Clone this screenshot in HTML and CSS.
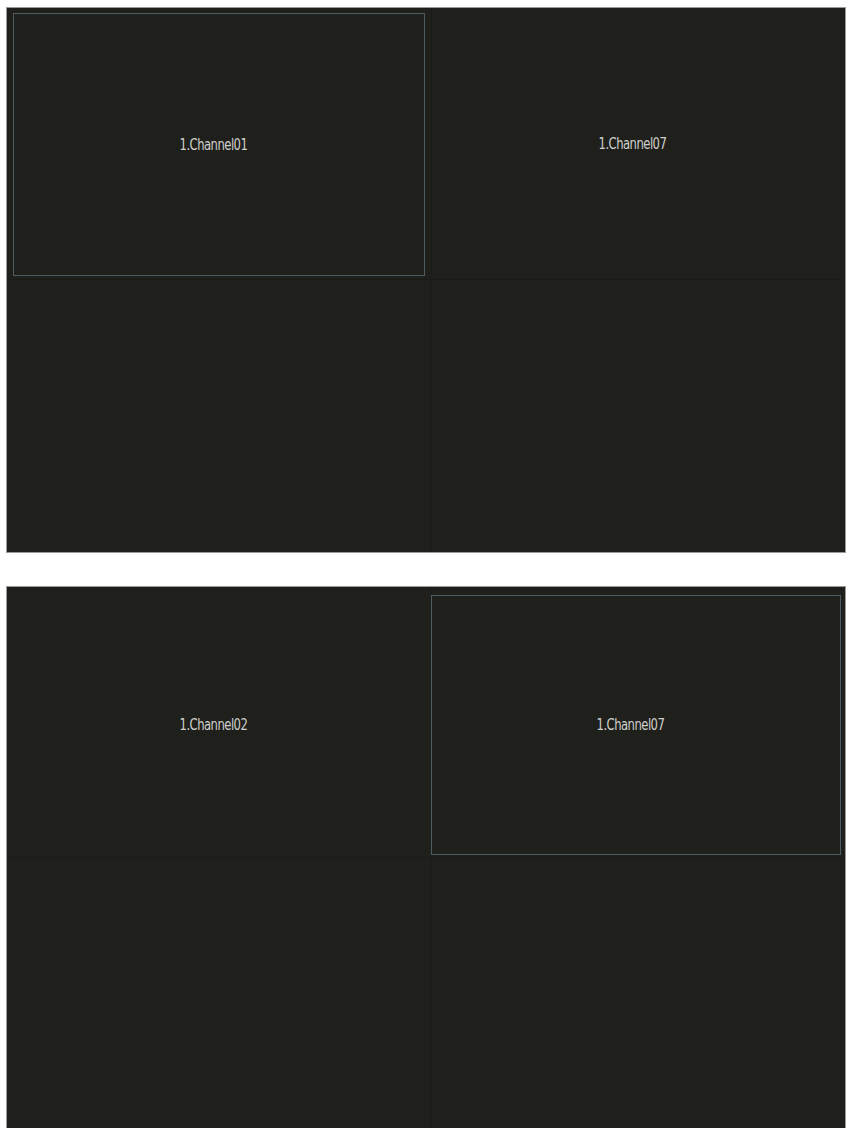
FILE: index.html
```html
<!DOCTYPE html>
<html>
<head>
<meta charset="utf-8">
<link rel="stylesheet" href="styles.css">
</head>
<body>
<div class="page">
  <div class="panel panel-top">
    <div class="cell"><div class="frame frame-a selected"><span class="label">1.Channel01</span></div></div>
    <div class="cell"><div class="frame"><span class="label">1.Channel07</span></div></div>
    <div class="cell"></div>
    <div class="cell"></div>
  </div>
  <div class="panel panel-bottom">
    <div class="cell"><div class="frame frame-c"><span class="label">1.Channel02</span></div></div>
    <div class="cell"><div class="frame frame-b selected"><span class="label">1.Channel07</span></div></div>
    <div class="cell"></div>
    <div class="cell"></div>
  </div>
</div>
</body>
</html>
```
FILE: styles.css
```css
html, body {
  margin: 0;
  padding: 0;
  background: #ffffff;
}
.page {
  padding: 8px 3px 0 7px;
  display: flex;
  flex-direction: column;
  gap: 35px;
}
.panel {
  width: 838px;
  background: #1f201c;
  box-shadow: 0 0 0 1px #9a9a96;
  display: grid;
  grid-template-columns: 425px 413px;
}
.panel-top {
  height: 544px;
  grid-template-rows: 272px 272px;
}
.panel-bottom {
  height: 541px;
  grid-template-rows: 271px 270px;
}
.cell {
  display: flex;
  box-sizing: border-box;
}
.cell:nth-child(1) { border-right: 1px solid #1b1c19; border-bottom: 1px solid #1b1c19; }
.cell:nth-child(2) { border-bottom: 1px solid #1b1c19; }
.cell:nth-child(3) { border-right: 1px solid #1b1c19; }
.frame {
  flex: 1;
  display: flex;
  align-items: center;
  justify-content: center;
  box-sizing: border-box;
  border: 1px solid transparent;
}
.selected {
  border-color: #4c5c62;
}
.frame-a {
  margin: 5px 6px 3px 6px;
}
.frame-b {
  margin: 8px 4px 2px -1px;
}
.frame-c {
  margin: 8px 0 2px 0;
}
.label {
  display: inline-block;
  font-family: "DejaVu Sans Condensed", "Liberation Sans", sans-serif;
  font-size: 15px;
  color: #cfcfcb;
  letter-spacing: -0.6px;
  transform: scaleX(0.86);
  margin-right: 12px;
}
```
